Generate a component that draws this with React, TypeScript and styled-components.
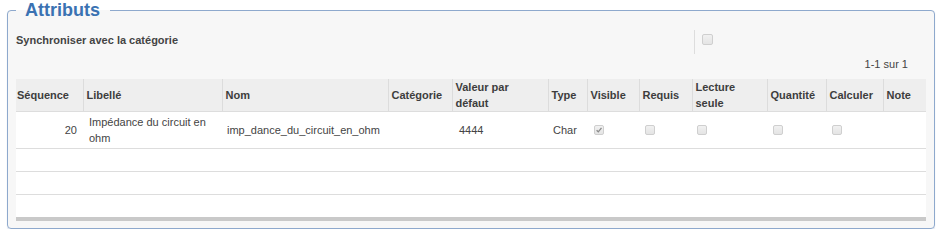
import React from "react";
import styled, { createGlobalStyle } from "styled-components";

const Global = createGlobalStyle`
  html, body { margin: 0; padding: 0; background: #ffffff; }
  body { font-family: "Liberation Sans", Arial, sans-serif; font-size: 11px; color: #444; }
`;

const Fieldset = styled.fieldset`
  box-sizing: border-box;
  margin: 0 0 0 7px;
  width: 928px;
  min-width: 0;
  padding: 0 8px 7px 8px;
  border: 1px solid #8ea9cd;
  border-radius: 4px;
  background: #f7f7f7;
  box-shadow: 0 1px 1px rgba(120, 150, 190, 0.35);
`;

const Legend = styled.legend`
  padding: 0 10px 0 9px;
  font-family: "Liberation Sans", Arial, sans-serif;
  font-weight: bold;
  font-size: 18px;
  line-height: 20px;
  color: #3a72b2;
`;

const SyncRow = styled.div`
  display: flex;
  margin-top: 10px;
  height: 24px;
`;

const SyncLabel = styled.div`
  width: 678px;
  padding-top: 2px;
  line-height: 16px;
  font-size: 11px;
  font-weight: bold;
  color: #444;
`;

const SyncValue = styled.div`
  border-left: 1px solid #dddddd;
  padding-left: 6px;
  padding-top: 4px;
`;

const Pager = styled.div`
  margin-top: 2px;
  line-height: 16px;
  font-size: 11px;
  text-align: right;
  padding-right: 18px;
  color: #444;
`;

const Table = styled.table`
  margin-top: 7px;
  width: 910px;
  table-layout: fixed;
  border-collapse: collapse;
  background: #ffffff;
`;

const Th = styled.th<{ $w: number; $first?: boolean }>`
  width: ${(p) => p.$w}px;
  height: 32px;
  box-sizing: border-box;
  padding: 0 2px 0 ${(p) => (p.$first ? 1 : 3)}px;
  background: #eeeeee;
  border-left: ${(p) => (p.$first ? "none" : "1px solid #dcdcdc")};
  border-bottom: 1px solid #dddddd;
  text-align: left;
  vertical-align: middle;
  font-weight: bold;
  font-size: 11px;
  line-height: 16px;
  color: #3d3d3d;
`;

const Tr = styled.tr<{ $h: number; $last?: boolean }>`
  height: ${(p) => p.$h}px;
  & > td {
    border-bottom: ${(p) => (p.$last ? "none" : "1px solid #dddddd")};
  }
`;

const Td = styled.td<{ $right?: boolean; $pl?: number }>`
  padding: 0 6px 0 ${(p) => (p.$pl ?? 5)}px;
  text-align: ${(p) => (p.$right ? "right" : "left")};
  vertical-align: middle;
  font-size: 11px;
  line-height: 16px;
  color: #444;
`;

const Scrollbar = styled.div`
  width: 910px;
  height: 4px;
  background: #c9c9c9;
`;

const Box = styled.span<{ $size: number }>`
  display: inline-block;
  box-sizing: border-box;
  width: ${(p) => p.$size}px;
  height: ${(p) => p.$size}px;
  border: 1px solid #cfcfcf;
  border-radius: 2px;
  background: linear-gradient(#f1f1f1, #e4e4e4);
  vertical-align: middle;
  position: relative;
  margin-left: 1px;
  margin-top: -3px;
  svg { position: absolute; left: 0; top: 0; }
`;

const Check = ({ checked, size = 10 }: { checked?: boolean; size?: number }) => (
  <Box $size={size}>
    {checked && (
      <svg width={size - 2} height={size - 2} viewBox="0 0 8 8">
        <path d="M1.6 4.2 L3.3 5.8 L6.5 1.9" fill="none" stroke="#8a8a8a" strokeWidth="1.3" />
      </svg>
    )}
  </Box>
);

const cols: { label: string[]; w: number }[] = [
  { label: ["Séquence"], w: 67 },
  { label: ["Libellé"], w: 139 },
  { label: ["Nom"], w: 166 },
  { label: ["Catégorie"], w: 64 },
  { label: ["Valeur par", "défaut"], w: 96 },
  { label: ["Type"], w: 39 },
  { label: ["Visible"], w: 52 },
  { label: ["Requis"], w: 53 },
  { label: ["Lecture", "seule"], w: 75 },
  { label: ["Quantité"], w: 59 },
  { label: ["Calculer"], w: 57 },
  { label: ["Note"], w: 43 },
];

const EmptyRow = ({ last }: { last?: boolean }) => (
  <Tr $h={last ? 22 : 23} $last={last}>
    {cols.map((c) => (
      <Td key={c.label.join(" ")}>&nbsp;</Td>
    ))}
  </Tr>
);

export default function App() {
  return (
    <>
      <Global />
      <Fieldset>
        <Legend>Attributs</Legend>
        <SyncRow>
          <SyncLabel>Synchroniser avec la catégorie</SyncLabel>
          <SyncValue>
            <Check size={11} />
          </SyncValue>
        </SyncRow>
        <Pager>1-1 sur 1</Pager>
        <Table>
          <thead>
            <tr>
              {cols.map((c, i) => (
                <Th key={c.label.join(" ")} $w={c.w} $first={i === 0}>
                  {c.label.map((l, j) => (
                    <React.Fragment key={l}>
                      {j > 0 && <br />}
                      {l}
                    </React.Fragment>
                  ))}
                </Th>
              ))}
            </tr>
          </thead>
          <tbody>
            <Tr $h={37}>
              <Td $right>20</Td>
              <Td $pl={6}>
                Impédance du circuit en
                <br />
                ohm
              </Td>
              <Td>imp_dance_du_circuit_en_ohm</Td>
              <Td></Td>
              <Td $pl={7}>4444</Td>
              <Td>Char</Td>
              <Td $pl={6}>
                <Check checked />
              </Td>
              <Td>
                <Check />
              </Td>
              <Td $pl={4}>
                <Check />
              </Td>
              <Td>
                <Check />
              </Td>
              <Td>
                <Check />
              </Td>
              <Td></Td>
            </Tr>
            <EmptyRow />
            <EmptyRow />
            <EmptyRow last />
          </tbody>
        </Table>
        <Scrollbar />
      </Fieldset>
    </>
  );
}
